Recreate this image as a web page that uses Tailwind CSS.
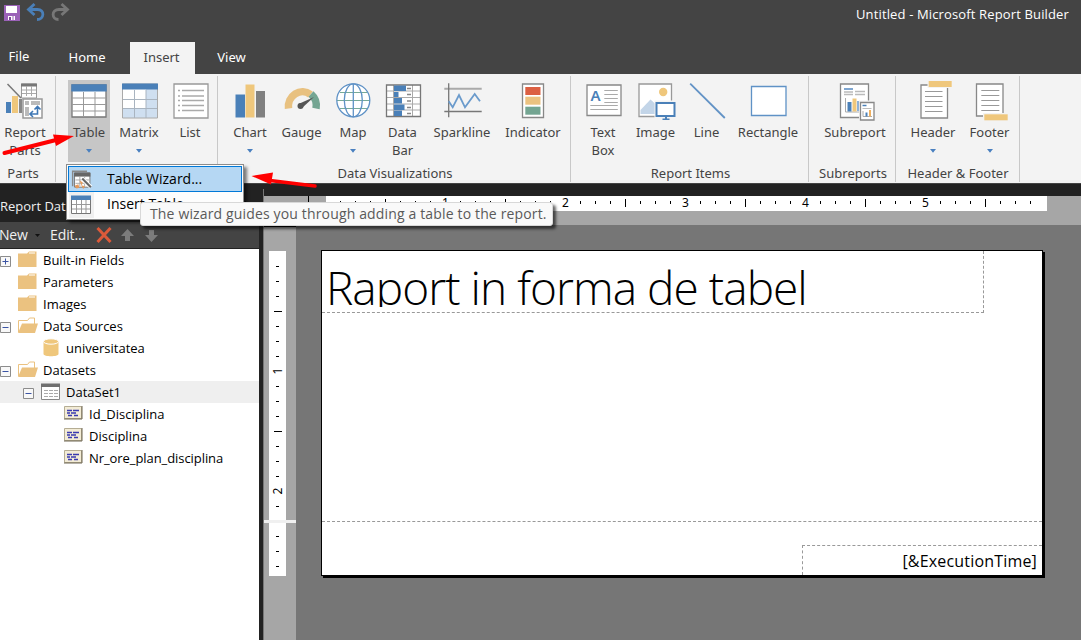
<!DOCTYPE html>
<html lang="en">
<head>
<meta charset="utf-8">
<title>Untitled - Microsoft Report Builder</title>
<script src="https://cdn.jsdelivr.net/npm/@tailwindcss/browser@4"></script>
</head>
<body class="relative flex h-[640px] w-[1081px] flex-col overflow-hidden bg-[#222222] font-['Noto_Sans',sans-serif] text-[13px] leading-[18px] text-[#444444]">

<!-- Title bar -->
<header class="flex h-[42px] shrink-0 justify-between bg-[#444444] text-white">
  <svg width="72" height="24" viewBox="0 0 72 24" fill="none">
    <path d="M4 5h16v16H4z" fill="#9b62b8"/><path d="M6 6h11v7H6zM8 16h7v4H8z" fill="#fff"/><path d="M9 17h2v3H9z" fill="#7d4a99"/><path d="M13 16v4" stroke="#9b62b8" stroke-width="1"/>
    <path d="M29 9.500h8.500c7.500 0 7 10-.5 10M34.500 4l-6 5.500 6 5.500" stroke="#4a7fb8" stroke-width="2.800"/>
    <path d="M67 9.500h-8c-8 0-7.500 10-.5 10M61.500 4l6 5.500-6 5.500" stroke="#777" stroke-width="2.800"/>
  </svg>
  <div class="pt-[5px] pr-[12px] font-['Open_Sans',sans-serif] tracking-[.14px]">Untitled - Microsoft Report Builder</div>
</header>

<!-- Tabs -->
<nav class="flex h-8 shrink-0 bg-[#444444] text-center leading-[31px] text-white">
  <div class="w-[38px] leading-[29px]">File</div>
  <div class="ml-[11px] w-[76px]">Home</div>
  <div class="ml-[5px] w-[65px] bg-[#f3f3f3] pr-[2px] text-[#444444]">Insert</div>
  <div class="w-[73px]">View</div>
</nav>

<!-- Ribbon -->
<section class="flex h-[109px] shrink-0 bg-[#f3f3f3] text-center">
  <div class="mt-[2px] flex h-[106px] w-[56px] flex-col justify-between border-r border-[#c8c8c8]">
    <div class="flex w-[50px] flex-col items-center pt-[4px]">
      <svg width="40" height="40" viewBox="0 0 40 40" fill="none">
        <path d="M2.500 4l13.500 14" stroke="#777" stroke-width="1.500"/>
        <path d="M16.500 4h15v14h-15z" fill="#fff" stroke="#999"/><path d="M16 3.500h16v3H16z" fill="#777"/><path d="M17 10h14M17 13.500h14M21.500 6v10M26.500 6v10" stroke="#aaa"/>
        <path d="M1 22h5v11H1z" fill="#4a80b8"/><path d="M7 16h6v17H7z" fill="#efc77c"/><path d="M14 19h3v14h-3z" fill="#888"/>
        <path d="M18 19h19v19H18z" fill="#fff" stroke="#999" stroke-width="1.500"/><path d="M20 21h4v4h-4zM26 21h9v4h-9zM20 27h4v9h-4z" fill="#bbb"/>
        <path d="M25 34h7.500v-7M29.500 29.500l3-3 3 3M28 31l-3 3 3 3" stroke="#3f78b5" stroke-width="1.600"/>
      </svg>
      <div class="mt-[3px]">Report<br>Parts</div>
    </div>
    <div class="w-[46px]">Parts</div>
  </div>

  <div class="mt-[2px] flex h-[106px] w-[162px] flex-col border-r border-[#c8c8c8] pl-[12px]">
    <div class="flex pt-[4px]">
      <div class="flex h-[82px] w-[42px] flex-col items-center bg-[#c6c6c6]">
        <svg class="shrink-0" width="40" height="40" viewBox="0 0 40 40" fill="none">
          <path d="M3 5h34v32H3z" fill="#fff" stroke="#777" stroke-width="1.300"/><path d="M2.300 4.300h35.400v7.200H2.300z" fill="#4a80b8"/>
          <path d="M3 18h34M3 24.500h34M3 31h34M14.500 12v25M26 12v25" stroke="#999"/>
        </svg>
        <div class="mt-[3px]">Table</div>
        <svg class="mt-[8px]" width="6" height="4"><path d="M0 0h6L3 3.800z" fill="#4a80c0"/></svg>
      </div>
      <div class="flex w-[58px] flex-col items-center">
        <svg width="40" height="40" viewBox="0 0 40 40" fill="none">
          <path d="M3.500 4h35v34h-35z" fill="#fff"/><path d="M27 9h11v29H27zM4 29h34v9H4z" fill="#cfdff0"/><path d="M3.500 4h35v34h-35z" stroke="#aaa"/><path d="M3 3.500h36v6H3z" fill="#4a80b8"/>
          <path d="M4 19.500h34M4 28.500h34M15.500 10v28M27 10v28" stroke="#a9b4c0"/>
        </svg>
        <div class="mt-[3px]">Matrix</div>
        <svg class="mt-[8px]" width="6" height="4"><path d="M0 0h6L3 3.800z" fill="#4a80c0"/></svg>
      </div>
      <div class="flex w-[44px] flex-col items-center">
        <svg width="40" height="40" viewBox="0 0 40 40" fill="none">
          <path d="M4 4h34v34H4z" fill="#fff" stroke="#999" stroke-width="1.300"/>
          <path d="M8 10.500h2M8 16h2M8 20.500h2M8 25.500h2M8 30.500h2M12 10.500h22M12 16h22M12 20.500h22M12 25.500h22M12 30.500h22" stroke="#aaa" stroke-width="1.300"/>
        </svg>
        <div class="mt-[3px]">List</div>
      </div>
    </div>
  </div>

  <div class="mt-[2px] flex h-[106px] w-[353px] flex-col justify-between border-r border-[#c8c8c8]">
    <div class="flex pt-[4px] pl-[7px]">
      <div class="flex w-[50px] flex-col items-center">
        <svg width="40" height="40" viewBox="0 0 40 40"><path d="M5.500 14.500H15v23H5.500z" fill="#4a80b8"/><path d="M15.500 4.500h9v33h-9z" fill="#efc77c"/><path d="M26 11h9v26.500h-9z" fill="#808080"/></svg>
        <div class="mt-[3px]">Chart</div>
        <svg class="mt-[8px]" width="6" height="4"><path d="M0 0h6L3 3.800z" fill="#4a80c0"/></svg>
      </div>
      <div class="flex w-[53px] flex-col items-center">
        <svg width="40" height="40" viewBox="0 0 40 40" fill="none">
          <path d="M6.500 28.500A14 15 0 0 1 28.500 14.500" stroke="#e8c180" stroke-width="7.500"/><path d="M29 14A14 15 0 0 1 34 28.500" stroke="#74a592" stroke-width="7.500"/>
          <path d="M16.500 24l15.500-7L20 28z" fill="#555"/><circle cx="18.500" cy="26" r="3" fill="#555"/>
        </svg>
        <div class="mt-[3px]">Gauge</div>
      </div>
      <div class="flex w-[50px] flex-col items-center">
        <svg width="40" height="40" viewBox="0 0 40 40" fill="none">
          <circle cx="20.300" cy="20.300" r="16.500" fill="#fff"/><path d="M7 12.500h27M4 20.500h33M7 28.500h27" stroke="#78aa98" stroke-width="1.200"/>
          <g stroke="#5f92c6" stroke-width="1.300"><circle cx="20.300" cy="20.300" r="16.500"/><ellipse cx="20.300" cy="20.300" rx="9" ry="16.500"/><path d="M20.300 4v33"/></g>
        </svg>
        <div class="mt-[3px]">Map</div>
        <svg class="mt-[8px]" width="6" height="4"><path d="M0 0h6L3 3.800z" fill="#4a80c0"/></svg>
      </div>
      <div class="flex w-[49px] flex-col items-center">
        <svg width="40" height="40" viewBox="0 0 40 40" fill="none">
          <path d="M3.500 5h34v31.500h-34z" fill="#fff"/><path d="M4 11h33M4 17.500h33M4 24h33M4 30h33M10.500 5v31M29.500 5v31" stroke="#aaa"/><path d="M3.500 5h34v31.500h-34z" stroke="#777" stroke-width="1.300"/>
          <path d="M11 5.500h12v5.500H11zM11 12h4.500v5H11zM11 18h8v5.500h-8zM11 24.500h10.500v5.500H11zM11 30.500h8v5.500h-8z" fill="#4a80b8"/>
          <path d="M24 8.500h4M24 14.500h4M24 21h4M24 27.500h4M24 33.500h4" stroke="#888" stroke-width="1.300"/>
        </svg>
        <div class="mt-[3px]">Data<br>Bar</div>
      </div>
      <div class="flex w-[70px] flex-col items-center">
        <svg width="40" height="40" viewBox="0 0 40 40" fill="none"><path d="M2.300 8.700h37.400" stroke="#aaa" stroke-width="2"/><path d="M6.700 3.300v34M2.300 31.500h37.400" stroke="#777" stroke-width="1.300"/><path d="M6.700 21.300l4 6L17 15l6 12.300L32.700 14l5.300 7.300" stroke="#6b9bcc" stroke-width="1.800"/></svg>
        <div class="mt-[3px]">Sparkline</div>
      </div>
      <div class="flex w-[72px] flex-col items-center">
        <svg width="40" height="40" viewBox="0 0 40 40"><path d="M9.500 4h21v33.500h-21z" fill="#fff" stroke="#888" stroke-width="1.300"/><path d="M12.300 7h15.200v8H12.300z" fill="#dc6043"/><path d="M12.300 16.700h15.200v8H12.300z" fill="#ebc280"/><path d="M12.300 26.700h15.200v8H12.300z" fill="#74a592"/></svg>
        <div class="mt-[3px]">Indicator</div>
      </div>
    </div>
    <div class="pl-[2px]">Data Visualizations</div>
  </div>

  <div class="mt-[2px] flex h-[106px] w-[238px] flex-col justify-between border-r border-[#c8c8c8]">
    <div class="flex pt-[4px] pl-[9px]">
      <div class="flex w-[46px] flex-col items-center">
        <svg width="40" height="40" viewBox="0 0 40 40" fill="none"><path d="M4 5h34v30.500H4z" fill="#fff" stroke="#888" stroke-width="1.300"/><text x="7.500" y="20.500" font-family="Noto Sans, sans-serif" font-size="15" font-weight="600" fill="#4a80b8">A</text><path d="M21.300 10.500h13.500M21.300 14.500h13.500M21.300 18.500h13.500M21.300 22.500h13.500M7.300 25.500h27.500M7.300 29.500h27.500" stroke="#aaa" stroke-width="1.200"/></svg>
        <div class="mt-[3px]">Text<br>Box</div>
      </div>
      <div class="flex w-[59px] flex-col items-center">
        <svg class="overflow-visible" width="40" height="40" viewBox="0 0 40 40" fill="none"><path d="M3 4h32.500v32.500H3z" fill="#fff" stroke="#999" stroke-width="1.300"/><circle cx="27.200" cy="12" r="4.200" fill="#efc77c"/><path d="M4.500 34v-4l10-10.500 5 4.500v10z" fill="#c3d5e8"/><path d="M18.500 20.500H41v18H18.500z" fill="#f3f3f3"/><path d="M20.500 23h18v13h-18z" fill="#fff" stroke="#4a80b8" stroke-width="2"/><path d="M29 36h2v2.500h2.500V40h-7v-1.500H29z" fill="#4a80b8"/></svg>
        <div class="mt-[3px]">Image</div>
      </div>
      <div class="flex w-[43px] flex-col items-center">
        <svg width="40" height="40" viewBox="0 0 40 40"><path d="M3.200 3.700L37.800 38" stroke="#6393c6" stroke-width="1.800"/></svg>
        <div class="mt-[3px]">Line</div>
      </div>
      <div class="flex w-[80px] flex-col items-center">
        <svg width="40" height="40" viewBox="0 0 40 40"><path d="M3.500 6.500h34.500v29H3.500z" fill="#fff" stroke="#5f92c6" stroke-width="1.300"/></svg>
        <div class="mt-[3px]">Rectangle</div>
      </div>
    </div>
    <div class="pl-[2px]">Report Items</div>
  </div>

  <div class="mt-[2px] flex h-[106px] w-[87px] flex-col justify-between border-r border-[#c8c8c8]">
    <div class="flex flex-col items-center pt-[4px] pl-[6px]">
      <svg class="overflow-visible" width="40" height="40" viewBox="0 0 40 40" fill="none">
        <path d="M5.500 4h28v33.500h-28z" fill="#fff" stroke="#888" stroke-width="1.300"/><path d="M9 9h9" stroke="#7fa6d0" stroke-width="2"/><path d="M9 12h9M9 14.500h9M20 11.500h10M20 14.500h10" stroke="#bbb" stroke-width="1.500"/>
        <path d="M10.500 18v14h15" stroke="#aaa"/><path d="M12.500 22h4v9.500h-4z" fill="#4a80b8"/><path d="M17.500 18.500h4v13h-4z" fill="#efc77c"/><path d="M22 21h2v10h-2z" fill="#8fb2d8"/>
        <path d="M24 20.500h17V41H24z" fill="#f3f3f3"/><path d="M25.500 22.500h13.500V40H25.500z" fill="#fff" stroke="#888" stroke-width="1.300"/><path d="M27.500 25.500h4" stroke="#4a80b8" stroke-width="1.500"/><path d="M27.500 28.500h9" stroke="#bbb"/><path d="M28 31v5.500h9" stroke="#aaa"/><path d="M30.500 32.500h2v4h-2z" fill="#4a80b8"/><path d="M34 30h2v6.500h-2z" fill="#efb060"/>
      </svg>
      <div class="mt-[3px]">Subreport</div>
    </div>
    <div class="pl-[2px]">Subreports</div>
  </div>

  <div class="mt-[2px] flex h-[106px] w-[124px] flex-col justify-between border-r border-[#c8c8c8]">
    <div class="flex pt-[4px] pl-[10px]">
      <div class="flex w-[54px] flex-col items-center">
        <svg width="40" height="40" viewBox="0 0 40 40"><path d="M8 5h26.500v33H8z" fill="#fff" stroke="#888" stroke-width="1.300"/><path d="M14.500 0H40v8H14.500z" fill="#f3f3f3"/><path d="M15.700 1h23v6h-23z" fill="#efc77c"/><path d="M12 11.500h17.500M12 16.500h17.500M12 21.500h17.500M12 26.500h17.500M12 31.500h17.500" stroke="#999" stroke-width="1.200"/></svg>
        <div class="mt-[3px]">Header</div>
        <svg class="mt-[8px]" width="6" height="4"><path d="M0 0h6L3 3.800z" fill="#4a80c0"/></svg>
      </div>
      <div class="flex w-[59px] flex-col items-center">
        <svg class="overflow-visible" width="40" height="40" viewBox="0 0 40 40"><path d="M6.500 4H33v32H6.500z" fill="#fff" stroke="#888" stroke-width="1.300"/><path d="M13 33h26v8H13z" fill="#f3f3f3"/><path d="M14.300 34.300h23.400v6H14.300z" fill="#efc77c"/><path d="M11.300 10.500h18M11.300 15.500h18M11.300 20.500h18M11.300 25.500h18M11.300 30.500h18" stroke="#999" stroke-width="1.200"/></svg>
        <div class="mt-[3px]">Footer</div>
        <svg class="mt-[8px]" width="6" height="4"><path d="M0 0h6L3 3.800z" fill="#4a80c0"/></svg>
      </div>
    </div>
    <div class="pl-[1px]">Header &amp; Footer</div>
  </div>
</section>

<!-- Workspace -->
<main class="flex min-h-0 flex-1 border-t border-[#444444]">
  <aside class="flex w-[259px] shrink-0 flex-col font-['Open_Sans',sans-serif] text-black">
    <div class="h-[38px] pt-[13px] text-[#f0f0f0]">Report Data</div>
    <div class="flex h-[26px] items-center bg-[#444444] text-[14px] leading-[26px] text-[#f0f0f0]">
      <span class="ml-[-1px] w-[36px] tracking-[-.2px]">New</span>
      <svg class="mt-[2px]" width="5" height="4"><path d="M0 0h5L2.500 3z" fill="#111"/></svg>
      <span class="ml-[10px] w-[46px] tracking-[-.1px]">Edit...</span>
      <svg width="66" height="20" viewBox="0 0 66 20" fill="none"><path d="M1.500 3l13 14M14.500 3l-13 14" stroke="#dc5a3a" stroke-width="3"/><path d="M31.500 4l6.500 7h-4v5h-5v-5h-4z" fill="#7c7c7c"/><path d="M55.500 17l6.500-7h-4V5h-5v5h-4z" fill="#7c7c7c"/></svg>
    </div>
    <div class="flex-1 border-t border-[#222222] bg-white leading-[22px]">
      <div class="flex h-[22px]"><svg width="43" height="22" fill="none"><path d="M.5 7.500h10v10H.5z" fill="#f8f8f8" stroke="#8c8c8c"/><path d="M2.500 12.500h6M5.500 9.500v6" stroke="#3b54a4"/><path d="M18 4.500h9l2-2h7.500V18H18z" fill="#ebc280"/><path d="M29 4h6" stroke="#fff"/></svg>Built-in Fields</div>
      <div class="flex h-[22px]"><svg width="43" height="22" fill="none"><path d="M18 4.500h9l2-2h7.500V18H18z" fill="#ebc280"/><path d="M29 4h6" stroke="#fff"/></svg>Parameters</div>
      <div class="flex h-[22px]"><svg width="43" height="22" fill="none"><path d="M18 4.500h9l2-2h7.500V18H18z" fill="#ebc280"/><path d="M29 4h6" stroke="#fff"/></svg>Images</div>
      <div class="flex h-[22px]"><svg width="43" height="22" fill="none"><path d="M.5 7.500h10v10H.5z" fill="#f8f8f8" stroke="#8c8c8c"/><path d="M2.500 12.500h6" stroke="#3b54a4"/><path d="M18.500 17V5.500h9l2-2.500h5v6" fill="#fff" stroke="#ebc280"/><path d="M18 18l4-9.500h16L35 18z" fill="#ebc280"/></svg>Data Sources</div>
      <div class="flex h-[22px]"><svg width="66" height="22"><path d="M43.500 5v12c0 3 15 3 15 0V5z" fill="#efc77c"/><ellipse cx="51" cy="4.500" rx="7.500" ry="2.700" fill="#efc77c" stroke="#fff"/></svg>universitatea</div>
      <div class="flex h-[22px]"><svg width="43" height="22" fill="none"><path d="M.5 7.500h10v10H.5z" fill="#f8f8f8" stroke="#8c8c8c"/><path d="M2.500 12.500h6" stroke="#3b54a4"/><path d="M18.500 17V5.500h9l2-2.500h5v6" fill="#fff" stroke="#ebc280"/><path d="M18 18l4-9.500h16L35 18z" fill="#ebc280"/></svg>Datasets</div>
      <div class="flex h-[22px] bg-[#efefef]"><svg width="66" height="22" fill="none"><path d="M23.500 7.500h10v10h-10z" fill="#f8f8f8" stroke="#8c8c8c"/><path d="M25.500 12.500h6" stroke="#3b54a4"/><path d="M41.500 3.500h18v15h-18z" fill="#fff" stroke="#888"/><path d="M41 2.500h19V6H41z" fill="#707070"/><path d="M44 9.500h4M49 9.500h4M54 9.500h4M44 12.500h4M49 12.500h4M54 12.500h4M44 15.500h4M49 15.500h4M54 15.500h4" stroke="#aaa"/></svg>DataSet1</div>
      <div class="flex h-[22px]"><svg width="89" height="22" fill="none"><path d="M64.500 3.500h17v12h-17z" fill="#f3ecd6" stroke="#b5ad94"/><path d="M82 3v13H64" stroke="#6e6652"/><path d="M67 7.500h5M73 7.500h6M67 10h3M71 10h5M68 12.500h4M74 12.500h4" stroke="#3a3ab0" stroke-width="1.400"/></svg>Id_Disciplina</div>
      <div class="flex h-[22px]"><svg width="89" height="22" fill="none"><path d="M64.500 3.500h17v12h-17z" fill="#f3ecd6" stroke="#b5ad94"/><path d="M82 3v13H64" stroke="#6e6652"/><path d="M67 7.500h5M73 7.500h6M67 10h3M71 10h5M68 12.500h4M74 12.500h4" stroke="#3a3ab0" stroke-width="1.400"/></svg>Disciplina</div>
      <div class="flex h-[22px] tracking-[-.07px]"><svg width="89" height="22" fill="none"><path d="M64.500 3.500h17v12h-17z" fill="#f3ecd6" stroke="#b5ad94"/><path d="M82 3v13H64" stroke="#6e6652"/><path d="M67 7.500h5M73 7.500h6M67 10h3M71 10h5M68 12.500h4M74 12.500h4" stroke="#3a3ab0" stroke-width="1.400"/></svg>Nr_ore_plan_disciplina</div>
    </div>
  </aside>

  <div class="mt-[5px] ml-[4px] flex flex-1 flex-col border-l border-[#767676]">
    <div class="mt-[7px] h-[29px] shrink-0 bg-[#a6a6a6]">
      <svg id="hruler" width="817" height="29" font-family="Noto Sans, sans-serif" font-size="12" text-anchor="middle" shape-rendering="crispEdges"><path d="M62 0h721v15H62z" fill="#fff"/><path d="M44 0h1v29h-1z"/></svg>
    </div>
    <div class="flex flex-1">
      <div class="w-[32px] border-t-2 border-black bg-[#a6a6a6]">
        <svg id="vruler" width="32" height="413" font-family="Noto Sans, sans-serif" font-size="12" text-anchor="middle" shape-rendering="crispEdges"><path d="M5 24h17v325H5z" fill="#fff"/></svg>
      </div>
      <div class="flex-1 bg-[#767676] pt-[25px] pl-[25px]">
        <div class="flex h-[326px] w-[722px] flex-col border border-black bg-white text-black shadow-[2px_2px_0_#000]">
          <div class="h-[62px] w-[662px] shrink-0 border-r border-b border-dashed border-[#999] font-['Open_Sans',sans-serif]">
            <div class="h-[56px] overflow-hidden pl-[4px] text-[46px] leading-[73px] font-light tracking-[-.96px] whitespace-nowrap">Raport in forma de tabel</div>
          </div>
          <div class="h-[209px] shrink-0 border-b border-dashed border-[#999]"></div>
          <div class="flex flex-1 items-end justify-end">
            <div class="h-[30px] w-[240px] border-t border-l border-dashed border-[#999] pr-[5px] text-right font-['Open_Sans',sans-serif] text-[16px] leading-[31px] tracking-[.18px]">[&amp;ExecutionTime]</div>
          </div>
        </div>
      </div>
    </div>
  </div>
</main>

<!-- Table menu -->
<div class="absolute top-[164px] left-[66px] h-[56px] w-[178px] border border-[#8c8c8c] bg-[#fdfdfd] p-px font-['Open_Sans',sans-serif] text-[14px] text-black shadow-[3px_3px_3px_rgba(0,0,0,.5)]">
  <div class="flex h-[26px] items-center border border-[#0078d7] bg-[#b5d7f3] leading-[22px]">
    <svg width="38" height="24" viewBox="0 0 38 25" fill="none"><path d="M3 20V4.500h15" stroke="#888" stroke-width="1.500"/><path d="M5 6h16v15H5z" fill="#fff" stroke="#777"/><path d="M4.500 6h17v4h-17z" fill="#666"/><path d="M6 13.500h14M6 17h14M10.500 10v10M15.500 10v10" stroke="#aaa"/><path d="M13 12l9 9" stroke="#fff" stroke-width="4"/><path d="M13 12l9 9" stroke="#666" stroke-width="2.200"/><path d="M10 14l3.500 2-1 3.500zM5 19.500l4-1.500 1 3.500-3 1zM12 19l4 1-2 3z" fill="#e59a5c"/></svg>
    <div class="pb-px">Table Wizard...</div>
  </div>
  <div class="flex h-[26px] items-center">
    <svg width="39" height="26" viewBox="0 0 39 26" fill="none"><path d="M1 0h25v26H1z" fill="#f0f0f0"/><path d="M3.500 4.500h19v17h-19z" fill="#fff" stroke="#777"/><path d="M3 3.500h20V8H3z" fill="#4a80b8"/><path d="M4 12.500h18M4 17h18M8.500 8v13M13.500 8v13M18 8v13" stroke="#999"/></svg>
    <div class="pb-[2px]">Insert Table</div>
    <svg class="mr-[-7px] ml-auto" width="4" height="8"><path d="M0 0l4 4-4 4z"/></svg>
  </div>
</div>

<!-- Tooltip -->
<div class="absolute top-[202px] left-[140px] h-[24px] w-[413px] rounded-[3px] border border-[#d8d8d8] bg-[#f9f9f9] pl-[9px] font-['Open_Sans',sans-serif] text-[14px] leading-[22px] tracking-[.15px] whitespace-nowrap text-[#5a5a5a] shadow-[3px_3px_3px_rgba(0,0,0,.6)]">The wizard guides you through adding a table to the report.</div>

<!-- Arrow annotations -->
<svg class="absolute top-0 left-0" width="330" height="200" viewBox="0 0 330 200" fill="#f00" stroke="#f00">
  <path d="M4.500 153L58 139.500" stroke-width="4" stroke-linecap="round"/><path d="M53 134.500l21 1.500-18 10z" stroke="none"/>
  <path d="M270 180.500l45 5.500" stroke-width="3.500" stroke-linecap="round"/><path d="M251.500 176l21.500-3.500-2 12z" stroke="none"/>
</svg>

<script>
const NS = 'http://www.w3.org/2000/svg';
const add = (svg, name, attrs, text) => {
  const el = document.createElementNS(NS, name);
  for (const k in attrs) el.setAttribute(k, attrs[k]);
  if (text) el.textContent = text;
  svg.appendChild(el);
};
const h = document.getElementById('hruler'), v = document.getElementById('vruler');
for (let i = 1; i < 48; i++) {
  const x = 61 + i * 15;
  if (i % 8 === 0) add(h, 'text', { x: x + .5, y: 11 }, String(i / 8));
  else add(h, 'rect', i % 4 === 0 ? { x, y: 3, width: 1, height: 8 } : { x, y: 5, width: 1, height: 3 });
}
for (let i = 1; i < 22; i++) {
  const y = 23 + i * 15;
  if (i === 18) continue;
  if (i % 8 === 0) add(v, 'text', { transform: `translate(18 ${y + 1}) rotate(-90)` }, String(i / 8));
  else add(v, 'rect', i % 4 === 0 && i < 18 ? { x: 10, y: y + 1, width: 8, height: 1 } : { x: 12, y: y + 1, width: 3, height: 1 });
}
add(v, 'rect', { x: 0, y: 293, width: 32, height: 3, fill: '#f0f0f0' });
</script>
</body>
</html>
